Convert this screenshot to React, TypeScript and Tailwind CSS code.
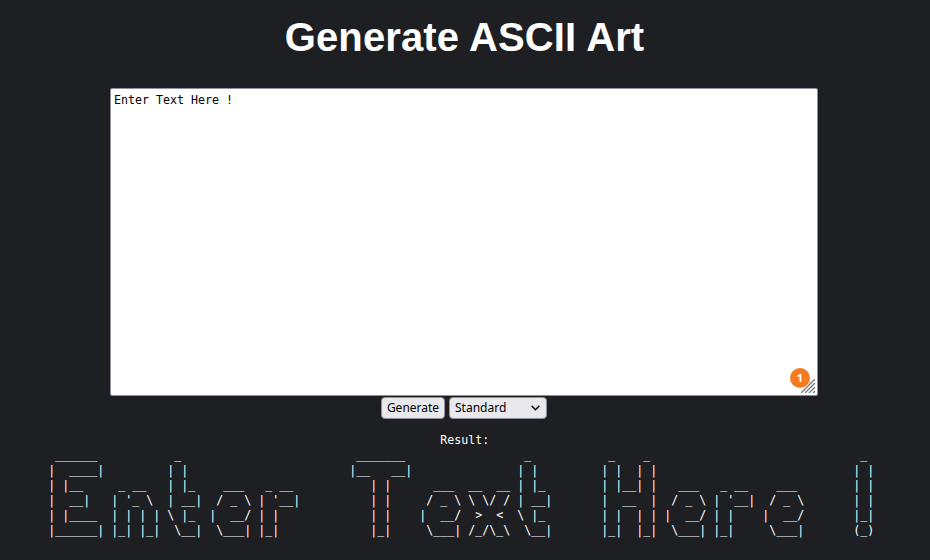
const GLYPHS: Record<string, string[]> = {
  E: [' ______ ', '|  ____|', '| |__   ', '|  __|  ', '| |____ ', '|______|'],
  n: ['       ', '       ', ' _ __  ', "| '_ \\ ", '| | | |', '|_| |_|'],
  t: [' _   ', '| |  ', '| |_ ', '| __|', '\\ |_ ', ' \\__|'],
  e: ['      ', '      ', '  ___ ', ' / _ \\', '|  __/', ' \\___|'],
  r: ['      ', '      ', ' _ __ ', "| '__|", '| |   ', '|_|   '],
  T: [' _______ ', '|__   __|', '   | |   ', '   | |   ', '   | |   ', '   |_|   '],
  x: ['      ', '      ', '__  __', '\\ \\/ /', ' >  < ', '/_/\\_\\'],
  H: [' _    _ ', '| |  | |', '| |__| |', '|  __  |', '| |  | |', '|_|  |_|'],
  '!': [' _ ', '| |', '| |', '| |', '|_|', '(_)'],
  ' ': ['     ', '     ', '     ', '     ', '     ', '     '],
};

const TEXT = 'Enter Text Here !';

function render(text: string) {
  return [0, 1, 2, 3, 4, 5]
    .map((row) => [...text].map((ch) => GLYPHS[ch][row]).join(' ') + ' ')
    .join('\n');
}

export default function App() {
  return (
    <main className="flex h-[560px] w-[930px] flex-col items-center overflow-hidden bg-[#1e1f23] pr-0.5 text-white">
      <h1 className="mt-[14px] h-[46px] whitespace-nowrap pl-px font-['Liberation_Sans',sans-serif] text-[40px] leading-[46px] font-bold tracking-[0.14px]">
        Generate ASCII Art
      </h1>

      <div className="relative mt-7 h-[308px] w-[708px]">
        <textarea
          defaultValue={TEXT}
          spellCheck={false}
          className="block h-full w-full resize-none rounded-[2px] border border-[#8f8f9d] bg-white px-[3px] py-[4px] font-['DejaVu_Sans_Mono',monospace] text-[11.63px] leading-[15px] text-black outline-none"
        />
        <span className="absolute right-[8px] bottom-[8px] flex size-5 items-center justify-center rounded-full bg-[#f47b20] font-['Open_Sans',sans-serif] text-[11px] font-bold text-white">
          1
        </span>
        <svg
          className="absolute right-[3px] bottom-[3px]"
          width="14"
          height="14"
          viewBox="0 0 14 14"
          fill="none"
          stroke="#77777a"
          strokeWidth="1.3"
        >
          <path d="M0 14 14 0M4 14 14 4M8 14 14 8M12 14 14 12" />
        </svg>
      </div>

      <div className="mt-px flex gap-1 font-['Noto_Sans',sans-serif] text-[12px] text-black">
        <button className="flex h-[22px] w-16 items-center justify-center rounded-[4px] border border-[#8f8f9d] bg-[#e9e9ed] leading-none">
          Generate
        </button>
        <button className="flex h-[22px] w-[98px] items-center justify-between rounded-[4px] border border-[#8f8f9d] bg-[#e9e9ed] pr-[6px] pl-[5px] leading-none">
          Standard
          <svg width="9" height="6" viewBox="0 0 9 6" fill="none" stroke="#111" strokeWidth="1.6">
            <path d="M0.7 0.9 4.5 4.7 8.3 0.9" />
          </svg>
        </button>
      </div>

      <div className="mt-[14px] flex flex-col items-center pl-[1.5px] font-['DejaVu_Sans_Mono',monospace] text-[11.63px] leading-[15px]">
        <p>Result:</p>
        <pre className="font-['DejaVu_Sans_Mono',monospace]">{render(TEXT)}</pre>
      </div>
    </main>
  );
}
